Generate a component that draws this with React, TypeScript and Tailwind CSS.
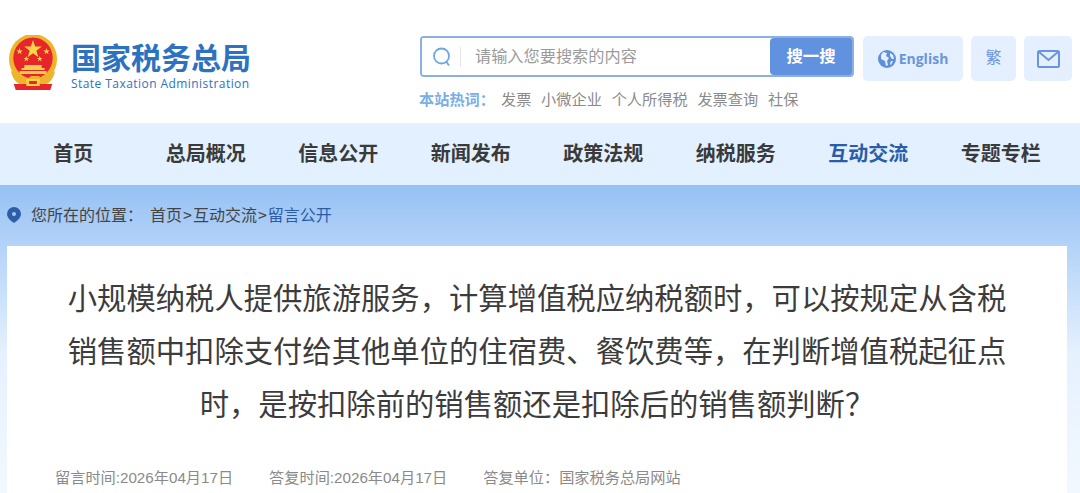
const cjk = { fontFamily: '"Noto Sans CJK SC", sans-serif' };
const nav = ["首页", "总局概况", "信息公开", "新闻发布", "政策法规", "纳税服务", "互动交流", "专题专栏"];
const hot = ["发票", "小微企业", "个人所得税", "发票查询", "社保"];

function Emblem() {
  return (
    <svg width="50" height="56" viewBox="0 0 52 56" className="shrink-0" preserveAspectRatio="none">
      <circle cx="26" cy="24" r="25" fill="#eeb52c" />
      <circle cx="26" cy="23" r="20.5" fill="#e8252a" />
      <path d="M26 5l2.2 6.6h6.9l-5.6 4.1 2.1 6.6-5.6-4.1-5.6 4.1 2.1-6.6-5.6-4.1h6.9z" fill="#f9d648" />
      <path d="M12 13l.9 2.4h2.5l-2 1.5.8 2.4-2.2-1.5-2 1.5.7-2.4-2-1.5h2.5zM40 13l.9 2.4h2.5l-2 1.5.8 2.4-2.2-1.5-2 1.5.7-2.4-2-1.5h2.5zM19 21l.8 2h2.2l-1.8 1.3.7 2.1-1.9-1.3-1.8 1.3.7-2.1-1.8-1.3h2.1zM33 21l.8 2h2.2l-1.8 1.3.7 2.1-1.9-1.3-1.8 1.3.7-2.1-1.8-1.3h2.1z" fill="#f9d648" />
      <path d="M14 33h24v2H14zM17 30h18v3H17zM12 36h28v3H12z" fill="#f5cf4a" />
      <path d="M3 36c2 8 5 11 9 13h28c4-2 7-5 9-13l-4 2c-2 3-5 5-9 6l-4-3h-8l-4 3c-4-1-7-3-9-6z" fill="#eeb52c" />
      <path d="M6 49h40l-2 6H8z" fill="#e8252a" />
      <path d="M19 44h14v7H19z" fill="#f5cf4a" />
      <path d="M22 46h8v3h-8z" fill="#e8252a" />
    </svg>
  );
}

export default function App() {
  return (
    <div className="w-[1080px] h-[493px] overflow-hidden bg-white flex flex-col" style={cjk}>
      <header className="h-[123px] shrink-0 flex">
        <div className="w-[420px] shrink-0 flex pl-2 pt-[35px] gap-[13px]">
          <Emblem />
          <div className="flex flex-col text-[#2d72c0]">
            <div className="text-[30px] leading-[36px] font-bold whitespace-nowrap mt-[6px]" style={{ fontFamily: '"Liberation Sans", "Noto Sans CJK SC", sans-serif' }}>国家税务总局</div>
            <div className="text-[12px] leading-[14px] tracking-[0.44px] mt-[0px] whitespace-nowrap" style={{ fontFamily: '"Open Sans", sans-serif' }}>State Taxation Administration</div>
          </div>
        </div>
        <div className="pt-[36px] w-[434px] shrink-0">
          <div className="h-[41px] flex border-2 border-[#8cb0e6] rounded-[4px] overflow-hidden">
            <div className="flex-1 flex items-center pl-[10px] bg-white">
              <svg width="20" height="22" viewBox="0 0 20 22" fill="none" stroke="#6fa8e0" strokeWidth="1.8">
                <circle cx="9.5" cy="10" r="7.5" />
                <path d="M14.5 16l2.5 3.5" />
              </svg>
              <div className="w-px h-[20px] bg-[#e5e5e5] ml-[8px]" />
              <span className="ml-[14px] text-[16.2px] leading-[24px] -mt-[4px] text-[#9a9a9a] whitespace-nowrap">请输入您要搜索的内容</span>
            </div>
            <div className="w-[82px] bg-[#6092e0] rounded-l-[4px] flex items-center justify-center text-white text-[16.4px] font-bold pb-[2px]">搜一搜</div>
          </div>
          <div className="flex items-center mt-[10px] text-[15.2px] leading-[22px] text-[#8a8a8a] whitespace-nowrap -ml-[1px]">
            <span className="text-[#7aaee6] font-bold">本站热词：</span>
            <div className="flex gap-[9.8px] ml-[6px]">
              {hot.map((h) => (
                <span key={h}>{h}</span>
              ))}
            </div>
          </div>
        </div>
        <div className="flex gap-[8px] pt-[36px] pl-[9px] text-[#6a95de]">
          <div className="w-[100px] h-[45px] bg-[#e4f0ff] rounded-[5px] flex items-center justify-center gap-[3px]">
            <svg width="18" height="18" viewBox="0 0 18 18">
              <circle cx="9" cy="9" r="9" fill="#5f8fdb" />
              <path d="M5 2l4 1-1 3 3 2-2 3 1 4-2 1-1-5-4-2V5zM12 3l3 2 1 4-2 0-2-3zM13 11l2 0-2 4-1-1z" fill="#e4f0ff" />
            </svg>
            <span className="text-[14px] font-bold whitespace-nowrap" style={{ fontFamily: '"Open Sans", sans-serif' }}>English</span>
          </div>
          <div className="w-[45px] h-[45px] bg-[#e4f0ff] rounded-[5px] flex items-center justify-center text-[16px] pb-[5px]">繁</div>
          <div className="w-[48px] h-[45px] bg-[#e4f0ff] rounded-[5px] flex items-center justify-center">
            <svg width="23" height="18" viewBox="0 0 23 18" fill="none" stroke="#6a95de" strokeWidth="2">
              <rect x="1" y="1" width="21" height="16" rx="1.5" />
              <path d="M2 2l9.5 8L21 2" />
            </svg>
          </div>
        </div>
      </header>
      <nav className="h-[62px] shrink-0 bg-[#e3f0ff] pl-[7px] pr-[13px] flex items-center">
        {nav.map((n, i) => (
          <a key={n} className={`flex-1 text-center text-[20px] font-bold leading-[58px] pb-[2px] ${i === 6 ? "text-[#2a5ca8]" : "text-[#3a3a3a]"}`}>
            {n}
          </a>
        ))}
      </nav>
      <div className="flex-1 min-h-0 bg-[linear-gradient(#96c1f4_0px,#b4d3f8_62px,#e6f1fe_170px,#f2f8ff_308px)] px-[7px]">
        <div className="h-[61px] flex items-center text-[16px] text-[#444] whitespace-nowrap pb-[4px]">
          <svg width="14" height="16" viewBox="0 0 14 16" className="mr-[10px] mt-[2px]">
            <path fillRule="evenodd" d="M7 0a7 7 0 0 1 7 7c0 3.8-4.6 7.6-7 9-2.4-1.4-7-5.2-7-9a7 7 0 0 1 7-7zm0 5a2 2 0 1 0 0 4 2 2 0 0 0 0-4z" fill="#2f5ea8" />
          </svg>
          <span>您所在的位置：</span>
          <span className="ml-[7px]">首页<span className="mx-[1px]">&gt;</span>互动交流<span className="mx-[1px]">&gt;</span></span>
          <span className="text-[#2a5ca8]">留言公开</span>
        </div>
        <main className="w-[1060px] h-[300px] bg-white pt-[24px] px-[58px]">
          <h1 className="text-[29.33px] leading-[53px] text-[#3c3c3c] text-center font-normal">
            小规模纳税人提供旅游服务，计算增值税应纳税额时，可以按规定从含税销售额中扣除支付给其他单位的住宿费、餐饮费等，在判断增值税起征点时，是按扣除前的销售额还是扣除后的销售额判断？
          </h1>
          <div className="flex mt-[38px] -ml-[10px] text-[15.2px] leading-[22px] text-[#8a8a8a] whitespace-nowrap" style={{ fontFamily: '"Liberation Sans", "Noto Sans CJK SC", sans-serif' }}>
            <span>留言时间:2026年04月17日</span>
            <span className="ml-[36px]">答复时间:2026年04月17日</span>
            <span className="ml-[36px]">答复单位：国家税务总局网站</span>
          </div>
        </main>
      </div>
    </div>
  );
}
